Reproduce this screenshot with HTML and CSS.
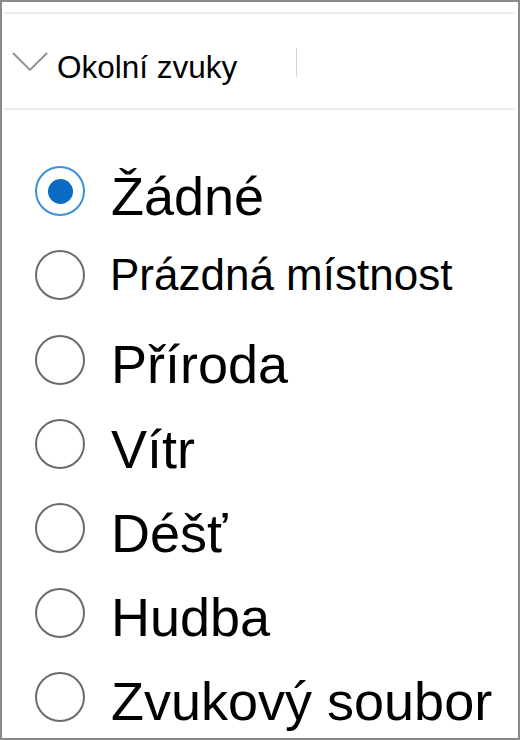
FILE: index.html
```html
<!DOCTYPE html>
<html lang="cs">
<head>
    <meta charset="UTF-8">
    <meta name="viewport" content="width=device-width, initial-scale=1.0">
    <title>Okolní zvuky</title>
    <link rel="stylesheet" href="styles.css">
</head>
<body>
    <div class="frame">
        <div class="top-line"></div>
        <div class="header">
            <svg class="chevron" width="36" height="20" viewBox="0 0 36 20">
                <polyline points="1,1 18,18 35,1" fill="none" stroke="#8f8f8f" stroke-width="1.8"/>
            </svg>
            <div class="title">Okolní zvuky</div>
            <div class="sep"></div>
        </div>
        <div class="header-line"></div>

        <form class="options">
            <label class="option">
                <input type="radio" name="zvuk" value="zadne" checked>
                <span class="text">Žádné</span>
            </label>
            <label class="option small">
                <input type="radio" name="zvuk" value="mistnost">
                <span class="text">Prázdná místnost</span>
            </label>
            <label class="option">
                <input type="radio" name="zvuk" value="priroda">
                <span class="text">Příroda</span>
            </label>
            <label class="option">
                <input type="radio" name="zvuk" value="vitr">
                <span class="text">Vítr</span>
            </label>
            <label class="option">
                <input type="radio" name="zvuk" value="dest">
                <span class="text">Déšť</span>
            </label>
            <label class="option">
                <input type="radio" name="zvuk" value="hudba">
                <span class="text">Hudba</span>
            </label>
            <label class="option">
                <input type="radio" name="zvuk" value="soubor">
                <span class="text">Zvukový soubor</span>
            </label>
        </form>
    </div>
</body>
</html>
```

FILE: styles.css
```css
* { margin: 0; padding: 0; box-sizing: border-box; }
body { font-family: "Liberation Sans", Arial, sans-serif; background: white; color: #000; }
.frame { width: 520px; height: 740px; border: 2px solid #8a8a8a; overflow: hidden; background: white; }
.top-line { margin: 10px 4px 0 2px; height: 2px; background: #ececec; }
.header { height: 94px; display: flex; align-items: flex-start; padding-left: 10px; }
.chevron { margin-top: 38px; flex-shrink: 0; }
.title { margin-top: 35px; margin-left: 9px; width: 239px; font-size: 31.5px; line-height: 36px; }
.sep { margin-top: 34px; width: 1px; height: 29px; background: #d6d6d6; }
.header-line { margin: 0 4px 0 2px; height: 2px; background: #ebebeb; }
.options { padding-top: 39px; }
.option { display: flex; align-items: center; height: 84.3px; padding-left: 33px; cursor: pointer; }
.option input { appearance: none; -webkit-appearance: none; flex-shrink: 0; width: 50px; height: 50px; border-radius: 50%; border: 2.5px solid #6b6b6b; background: white; margin: 0; position: relative; cursor: pointer; }
.option input:checked { border: 2px solid #3b8fdc; }
.option input:checked::after { content: ""; position: absolute; left: 10.5px; top: 10.5px; width: 25px; height: 25px; border-radius: 50%; background: #0a6bc5; }
.option .text { margin-left: 26px; font-size: 54px; line-height: 54px; margin-top: 9px; white-space: nowrap; }
.option.small .text { font-size: 44px; line-height: 44px; margin-top: 0; margin-left: 25px; }
```
